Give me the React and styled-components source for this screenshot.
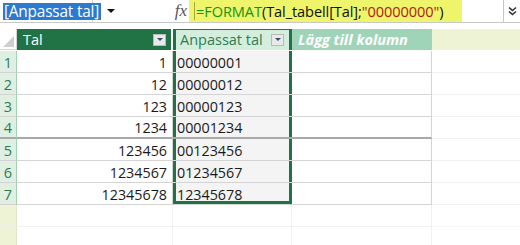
import React from 'react';
import styled, { createGlobalStyle } from 'styled-components';

const GlobalStyle = createGlobalStyle`
  html, body {
    margin: 0;
    padding: 0;
    background: #ffffff;
    overflow: hidden;
  }
  body {
    width: 520px;
    height: 245px;
    font-family: "Open Sans", "Noto Sans", sans-serif;
  }
`;

const green = '#217346';

const FormulaBar = styled.div`
  display: flex;
  height: 22px;
  border-bottom: 1px solid #c8c8c8;
  font-family: "Open Sans", "Noto Sans", sans-serif;
  font-size: 14.6px;
`;

const NameBox = styled.div`
  flex: none;
  width: 93px;
  box-sizing: border-box;
  display: flex;
  align-items: center;
  padding-left: 3px;
  border-right: 1px solid #d6d6d6;
`;

const Selected = styled.span`
  background: #2b79d0;
  color: #ffffff;
  font-size: 15.4px;
  line-height: 17px;
  padding: 0 2px 0 1px;
  white-space: nowrap;
  letter-spacing: -0.2px;
`;

const NameDrop = styled.div`
  flex: none;
  width: 57px;
  display: flex;
  align-items: center;
  padding-left: 14px;
  box-sizing: border-box;
  &::after {
    content: '';
    border-left: 4px solid transparent;
    border-right: 4px solid transparent;
    border-top: 4px solid #111;
  }
`;

const Fx = styled.div`
  flex: none;
  width: 39px;
  display: flex;
  align-items: center;
  justify-content: flex-end;
  padding-right: 2px;
  box-sizing: border-box;
  font-family: "Liberation Serif", serif;
  font-style: italic;
  font-size: 17px;
  color: #555;
`;

const FormulaInput = styled.div`
  flex: 1;
  display: flex;
  align-items: stretch;
`;

const Highlight = styled.div`
  width: 273px;
  background: #eef56a;
  display: flex;
  align-items: center;
  white-space: nowrap;
  letter-spacing: -0.1px;
  &::before {
    content: '';
    width: 1px;
    height: 18px;
    background: #a6a83a;
    margin: 0 1px 0 5px;
  }
`;

const Tok = styled.span`
  color: ${p => p.$c || '#111'};
`;

const Expand = styled.div`
  flex: none;
  width: 16px;
  border-left: 1px solid #c8c8c8;
  display: flex;
  align-items: center;
  justify-content: center;
`;

const Sheet = styled.div`
  margin-top: 6px;
  display: grid;
  grid-template-columns: 17px 156px 119px 140px 88px;
  grid-auto-rows: 22px;
`;

const Corner = styled.div`
  position: relative;
  height: 21px;
  border-right: 1px solid #d6d6d6;
  border-bottom: 1px solid #d6d6d6;
  box-sizing: border-box;
  &::after {
    content: '';
    position: absolute;
    right: 2px;
    bottom: 2px;
    border-left: 11px solid transparent;
    border-bottom: 11px solid #cfcfcf;
  }
`;

const Head = styled.div`
  height: 21px;
  display: flex;
  align-items: center;
  padding: 0 5px 0 6px;
  box-sizing: border-box;
  font-size: 14.5px;
  white-space: nowrap;
  background: ${p => p.$bg};
  color: ${p => p.$fg};
  font-weight: ${p => (p.$bold ? 700 : 400)};
  font-style: ${p => (p.$italic ? 'italic' : 'normal')};
  border-right: ${p => (p.$gap ? '2px solid #fff' : 'none')};
  box-shadow: ${p => (p.$sel ? `inset 3px 0 0 ${green}, inset -3px 0 0 ${green}, inset 0 1px 0 ${green}` : 'none')};
  padding-left: ${p => (p.$sel ? '7px' : '6px')};
`;

const HeadText = styled.span`
  flex: 1;
`;

const DropBtn = styled.div`
  width: 11px;
  height: 10px;
  border: 1px solid #b9b9b9;
  background: #e9e9e9;
  display: flex;
  align-items: center;
  justify-content: center;
  margin-right: ${p => (p.$sel ? '3px' : '0')};
  &::after {
    content: '';
    border-left: 3px solid transparent;
    border-right: 3px solid transparent;
    border-top: 3px solid #3b4c6b;
  }
`;

const RowNum = styled.div`
  display: flex;
  align-items: center;
  justify-content: center;
  padding-top: 1px;
  font-size: 14.5px;
  box-sizing: border-box;
  background: ${p => (p.$active ? '#dff0e3' : '#eff3d6')};
  color: #2f7a50;
  border-right: 1px solid ${p => (p.$active ? '#9fd3b2' : '#e3e8c4')};
  border-bottom: ${p => p.$line};
`;

const Cell = styled.div`
  display: flex;
  align-items: center;
  justify-content: ${p => (p.$right ? 'flex-end' : 'flex-start')};
  padding: 1px 5px 0 3px;
  box-sizing: border-box;
  font-size: 14.3px;
  color: #1a1a1a;
  background: ${p => (p.$sel ? '#f4f4f4' : '#ffffff')};
  border-bottom: ${p => p.$line};
  border-right: ${p => (p.$vline ? `1px solid ${p.$vline}` : 'none')};
  box-shadow: ${p =>
    p.$sel
      ? `inset 3px 0 0 ${green}, inset -3px 0 0 ${green}${p.$last ? `, inset 0 -3px 0 ${green}` : ''}`
      : 'none'};
  padding-left: ${p => (p.$sel ? '4px' : '3px')};
`;

const values = [1, 12, 123, 1234, 123456, 1234567, 12345678];

function lineFor(i) {
  if (i === 3) return '2px solid #a9a9a9';
  if (i < 7) return '1px solid #d4d4d4';
  return '1px solid #f0f0f0';
}

export default function App() {
  const rows = [];
  for (let i = 0; i < 9; i++) {
    const v = values[i];
    const has = v !== undefined;
    const line = lineFor(i);
    rows.push(
      <React.Fragment key={i}>
        <RowNum $active={has} $line={line}>{has ? i + 1 : ''}</RowNum>
        <Cell $right $line={line} $vline={has ? '#d4d4d4' : '#f0f0f0'}>{has ? v : ''}</Cell>
        <Cell $sel={has} $last={i === 6} $line={has ? line : '1px solid #f0f0f0'} $vline={has ? null : '#f0f0f0'}>
          {has ? String(v).padStart(8, '0') : ''}
        </Cell>
        <Cell $line={line} $vline={has ? '#d4d4d4' : '#f0f0f0'} />
        <Cell $line={has ? '1px solid #f2f2f2' : '1px solid #f6f6f6'} />
      </React.Fragment>
    );
  }

  return (
    <>
      <GlobalStyle />
      <FormulaBar>
        <NameBox>
          <Selected>[Anpassat tal]</Selected>
        </NameBox>
        <NameDrop />
        <Fx>fx</Fx>
        <FormulaInput>
          <Highlight>
            <Tok $c="#149414">=FORMAT</Tok>
            <Tok>(Tal_tabell[Tal];</Tok>
            <Tok $c="#b01818">"00000000"</Tok>
            <Tok>)</Tok>
          </Highlight>
        </FormulaInput>
        <Expand>
          <svg width="9" height="11" viewBox="0 0 9 11">
            <path d="M1 1.5 L4.5 4.5 L8 1.5 M1 5.5 L4.5 8.5 L8 5.5" fill="none" stroke="#333" strokeWidth="1.6" />
          </svg>
        </Expand>
      </FormulaBar>
      <Sheet>
        <Corner />
        <Head $bg={green} $fg="#ffffff" $gap>
          <HeadText>Tal</HeadText>
          <DropBtn />
        </Head>
        <Head $bg="#d4eedd" $fg="#2e7d52" $sel>
          <HeadText>Anpassat tal</HeadText>
          <DropBtn $sel />
        </Head>
        <Head $bg="#a0d4b8" $fg="#ffffff" $bold $italic>
          <HeadText>Lägg till kolumn</HeadText>
        </Head>
        <Head $bg="#eff3d6" $fg="#fff" />
        {rows}
      </Sheet>
    </>
  );
}
